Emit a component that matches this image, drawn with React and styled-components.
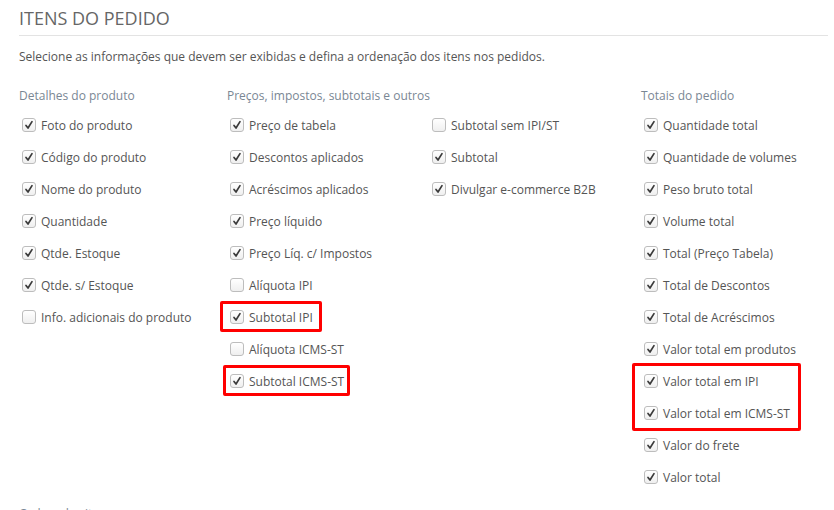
import React from "react";
import styled, { createGlobalStyle } from "styled-components";

const GlobalStyle = createGlobalStyle`
  body {
    margin: 0;
    background: #fff;
    font-family: "Open Sans", "Noto Sans", sans-serif;
    color: #555;
  }
`;

const Page = styled.div`
  padding: 6px 6px 0 19px;
  height: 510px;
  overflow: hidden;
  box-sizing: border-box;
`;

const Title = styled.h2`
  margin: 0;
  padding-bottom: 5px;
  font-size: 18px;
  font-weight: 400;
  color: #666;
  border-bottom: 1px solid #e3e3e3;
  line-height: 24px;
`;

const Description = styled.p`
  margin: 12px 0 0;
  font-size: 12px;
  line-height: 17px;
  color: #555;
`;

const Columns = styled.div`
  display: grid;
  grid-template-columns: 208px 414px 1fr;
  margin-top: 22px;
`;

const Section = styled.div`
  display: flex;
  flex-direction: column;
`;

const SectionTitle = styled.div`
  font-size: 12px;
  line-height: 17px;
  color: #7a8794;
  margin-bottom: 5px;
`;

const SubColumns = styled.div`
  display: grid;
  grid-template-columns: 202px 1fr;
`;

const List = styled.div`
  display: flex;
  flex-direction: column;
`;

const Row = styled.label`
  position: relative;
  display: flex;
  align-items: center;
  gap: 5px;
  height: 32px;
  padding-left: 3px;
  font-size: 12px;
  color: #555;
  width: max-content;

  ${({ $mark }) =>
    $mark &&
    `
    &::after {
      content: "";
      position: absolute;
      top: 0;
      bottom: 1px;
      left: ${$mark.left}px;
      right: ${$mark.right}px;
      border: 3px solid #ff0000;
      border-radius: 2px;
      pointer-events: none;
    }
  `}
`;

const Marked = styled.div`
  position: relative;
  display: flex;
  flex-direction: column;

  &::after {
    content: "";
    position: absolute;
    top: -2px;
    bottom: -2px;
    left: -9px;
    right: 27px;
    border: 3px solid #ff0000;
    border-radius: 2px;
    pointer-events: none;
  }
`;

const Box = styled.span`
  width: 14px;
  height: 14px;
  box-sizing: border-box;
  border: 1px solid #bdbdbd;
  border-radius: 3px;
  background: linear-gradient(#ffffff, #efefef);
  display: flex;
  align-items: center;
  justify-content: center;
  flex-shrink: 0;
`;

const Footer = styled.div`
  margin-top: 12px;
  font-size: 12px;
  color: #7a8794;
`;

const Check = ({ checked }) => (
  <Box>
    {checked && (
      <svg width="10" height="10" viewBox="0 0 10 10">
        <path
          d="M2 5.4 L4 8 L8 1.6"
          fill="none"
          stroke="#3a3a3a"
          strokeWidth="1.7"
          strokeLinecap="round"
          strokeLinejoin="round"
        />
      </svg>
    )}
  </Box>
);

const Item = ({ label, checked = true, mark }) => (
  <Row $mark={mark}>
    <Check checked={checked} />
    {label}
  </Row>
);

const produto = [
  ["Foto do produto"],
  ["Código do produto"],
  ["Nome do produto"],
  ["Quantidade"],
  ["Qtde. Estoque"],
  ["Qtde. s/ Estoque"],
  ["Info. adicionais do produto", false],
];

const precosA = [
  ["Preço de tabela"],
  ["Descontos aplicados"],
  ["Acréscimos aplicados"],
  ["Preço líquido"],
  ["Preço Líq. c/ Impostos"],
  ["Alíquota IPI", false],
  ["Subtotal IPI", true, { left: -7, right: -9 }],
  ["Alíquota ICMS-ST", false],
  ["Subtotal ICMS-ST", true, { left: -4, right: -6 }],
];

const precosB = [
  ["Subtotal sem IPI/ST", false],
  ["Subtotal"],
  ["Divulgar e-commerce B2B"],
];

const totaisA = [
  ["Quantidade total"],
  ["Quantidade de volumes"],
  ["Peso bruto total"],
  ["Volume total"],
  ["Total (Preço Tabela)"],
  ["Total de Descontos"],
  ["Total de Acréscimos"],
  ["Valor total em produtos"],
];

const totaisMarked = [["Valor total em IPI"], ["Valor total em ICMS-ST"]];

const totaisB = [["Valor do frete"], ["Valor total"]];

const renderItems = (items) =>
  items.map(([label, checked, mark]) => (
    <Item key={label} label={label} checked={checked !== false} mark={mark} />
  ));

export default function App() {
  return (
    <Page>
      <GlobalStyle />
      <Title>ITENS DO PEDIDO</Title>
      <Description>
        Selecione as informações que devem ser exibidas e defina a ordenação dos
        itens nos pedidos.
      </Description>

      <Columns>
        <Section>
          <SectionTitle>Detalhes do produto</SectionTitle>
          <List>{renderItems(produto)}</List>
        </Section>

        <Section>
          <SectionTitle>Preços, impostos, subtotais e outros</SectionTitle>
          <SubColumns>
            <List>{renderItems(precosA)}</List>
            <List>{renderItems(precosB)}</List>
          </SubColumns>
        </Section>

        <Section>
          <SectionTitle>Totais do pedido</SectionTitle>
          <List>
            {renderItems(totaisA)}
            <Marked>{renderItems(totaisMarked)}</Marked>
            {renderItems(totaisB)}
          </List>
        </Section>
      </Columns>

      <Footer>Ordem dos itens</Footer>
    </Page>
  );
}
